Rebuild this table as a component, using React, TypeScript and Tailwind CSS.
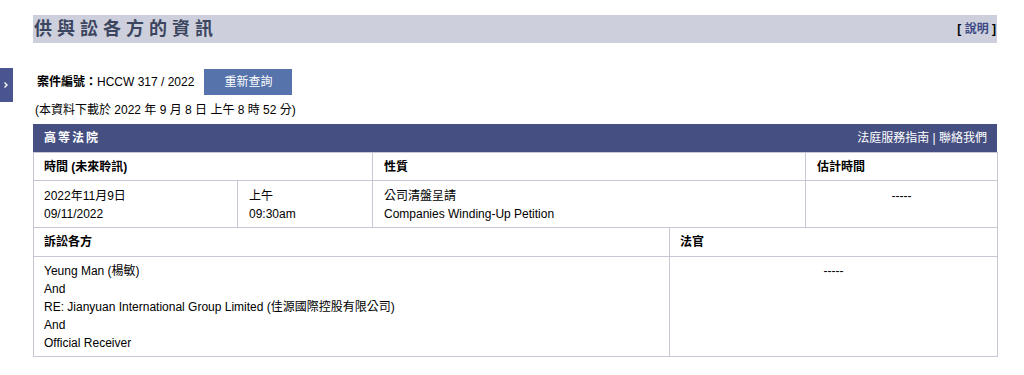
import React from "react";

const font = { fontFamily: '"Liberation Sans", Arial, "Noto Sans CJK TC", sans-serif' };

export default function App() {
  return (
    <div className="relative min-h-[375px] w-[1024px] bg-white text-[12px] text-black" style={font}>
      {/* side drawer tab */}
      <div className="absolute left-0 top-[68px] flex h-[34px] w-[13px] items-center justify-start pl-[3px] bg-[#4a5590]">
        <svg width="6" height="8" viewBox="0 0 6 8">
          <path d="M1.5 1.5 L4 4 L1.5 6.5" stroke="#fff" strokeWidth="1.4" fill="none" />
        </svg>
      </div>

      <div className="ml-[33px] w-[964px] pt-[15px]">
        {/* page heading */}
        <div className="flex h-[28px] items-center justify-between bg-[#cdd0dc] pl-[1px] pr-[1px]">
          <h1 className="text-[18px] font-bold tracking-[5px] text-[#3c4560]">供與訟各方的資訊</h1>
          <div className="font-bold">
            [ <span className="text-[#3d4a85]">說明</span> ]
          </div>
        </div>

        {/* case number and re-query */}
        <div className="mt-[26px] flex items-center pl-[4px]">
          <span className="font-bold">案件編號：</span>
          <span>HCCW 317 / 2022</span>
          <button className="ml-[10px] h-[26px] w-[88px] bg-[#5673ab] text-[12px] text-white">重新查詢</button>
        </div>
        <div className="mt-[8px] pl-[2px] leading-[14px]">(本資料下載於 2022 年 9 月 8 日 上午 8 時 52 分)</div>

        {/* court header */}
        <div className="mt-[7px] flex h-[28px] items-center justify-between bg-[#454f82] pl-[11px] pr-[10px] text-white">
          <span className="font-bold tracking-[2px]">高等法院</span>
          <span>法庭服務指南 | 聯絡我們</span>
        </div>

        {/* hearing table */}
        <table className="w-[964px] table-fixed border-collapse">
          <colgroup>
            <col className="w-[204px]" />
            <col className="w-[135px]" />
            <col className="w-[433px]" />
            <col className="w-[192px]" />
          </colgroup>
          <tbody>
            <tr className="h-[28px]">
              <th colSpan={2} className="border border-[#c6c8d6] px-[10px] text-left font-bold">時間 (未來聆訊)</th>
              <th className="border border-[#c6c8d6] px-[11px] text-left font-bold">性質</th>
              <th className="border border-[#c6c8d6] px-[11px] text-left font-bold">估計時間</th>
            </tr>
            <tr className="h-[47px] align-top">
              <td className="border border-[#c6c8d6] px-[10px] pt-[6px] leading-[18px]">
                2022年11月9日
                <br />
                09/11/2022
              </td>
              <td className="border border-[#c6c8d6] px-[11px] pt-[6px] leading-[18px]">
                上午
                <br />
                09:30am
              </td>
              <td className="border border-[#c6c8d6] px-[11px] pt-[6px] leading-[18px]">
                公司清盤呈請
                <br />
                Companies Winding-Up Petition
              </td>
              <td className="border border-[#c6c8d6] pt-[6px] text-center leading-[18px]">-----</td>
            </tr>
          </tbody>
        </table>

        {/* parties table */}
        <table className="w-[964px] table-fixed border-collapse">
          <colgroup>
            <col className="w-[636px]" />
            <col className="w-[328px]" />
          </colgroup>
          <tbody>
            <tr className="h-[28px]">
              <th className="border border-t-0 border-[#c6c8d6] px-[10px] text-left font-bold">訴訟各方</th>
              <th className="border border-t-0 border-[#c6c8d6] px-[10px] text-left font-bold">法官</th>
            </tr>
            <tr className="align-top">
              <td className="border border-[#c6c8d6] px-[10px] pb-[4px] pt-[5px] leading-[18px]">
                Yeung Man (楊敏)
                <br />
                And
                <br />
                RE: Jianyuan International Group Limited (佳源國際控股有限公司)
                <br />
                And
                <br />
                Official Receiver
              </td>
              <td className="border border-[#c6c8d6] pt-[5px] text-center leading-[18px]">-----</td>
            </tr>
          </tbody>
        </table>
      </div>
    </div>
  );
}
